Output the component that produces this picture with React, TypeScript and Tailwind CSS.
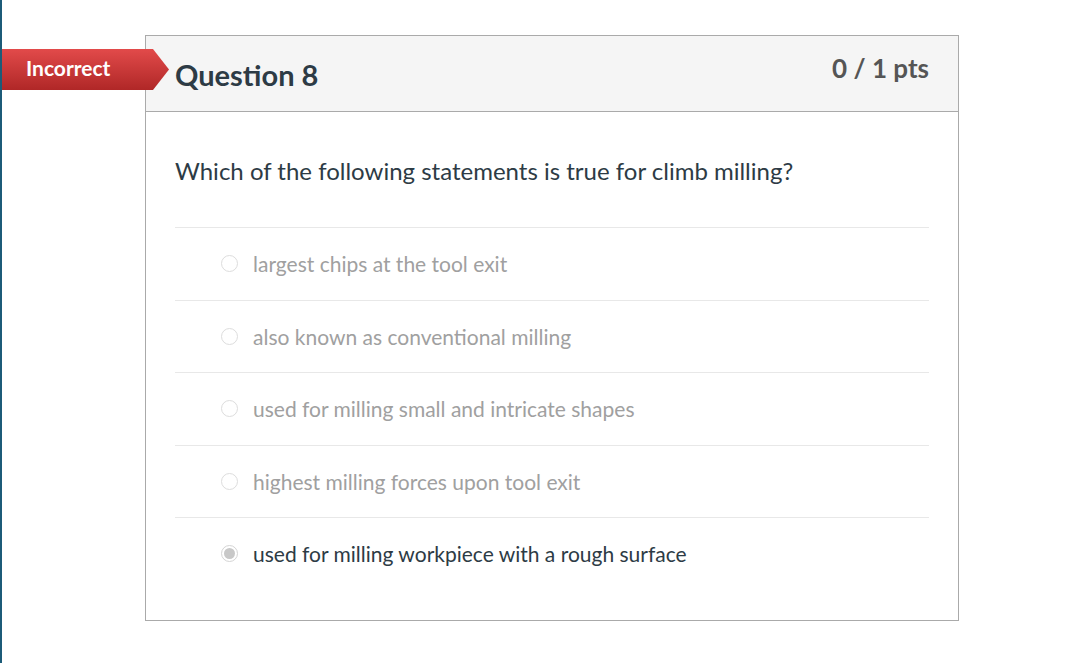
export default function App() {
  const answers = [
    { text: "largest chips at the tool exit", selected: false },
    { text: "also known as conventional milling", selected: false },
    { text: "used for milling small and intricate shapes", selected: false },
    { text: "highest milling forces upon tool exit", selected: false },
    { text: "used for milling workpiece with a rough surface", selected: true },
  ];

  return (
    <div
      className="relative h-[663px] w-full border-l-2 border-[#1c5b78] bg-white"
      style={{ fontFamily: "Lato, 'Open Sans', sans-serif" }}
    >
      <div className="pt-[35px] pl-[143px]">
        <div className="flex h-[586px] w-[814px] flex-col border border-[#aaaaaa]">
          <div className="flex h-[76px] items-start justify-between border-b border-[#aaaaaa] bg-[#f5f5f5] px-[29px]">
            <h2 className="mt-[17px] text-[29px] font-bold text-[#2d3b45]">Question 8</h2>
            <span className="mt-[13px] text-[26px] font-bold text-[#555555]">0 / 1 pts</span>
          </div>
          <div className="px-[29px]">
            <p className="mt-[41px] mb-[38px] text-[24px] text-[#2d3b45]">
              Which of the following statements is true for climb milling?
            </p>
            <div>
              {answers.map((a) => (
                <div
                  key={a.text}
                  className="flex h-[72.5px] items-center border-t border-[#e8e8e8] pl-[46px]"
                >
                  {a.selected ? (
                    <span className="mr-[15px] flex h-[17px] w-[17px] items-center justify-center rounded-full border border-[#d4d4d4] bg-white">
                      <span className="h-[11px] w-[11px] rounded-full bg-[#c8c8c8]" />
                    </span>
                  ) : (
                    <span className="mr-[15px] h-[17px] w-[17px] rounded-full border border-[#dddddd] bg-white" />
                  )}
                  <span
                    className={
                      a.selected
                        ? "text-[21px] text-[#2d3b45]"
                        : "text-[21px] text-[#a0a0a0]"
                    }
                  >
                    {a.text}
                  </span>
                </div>
              ))}
            </div>
          </div>
        </div>
      </div>

      <div className="absolute top-[49px] left-0 flex h-[41px] w-[167px] items-center bg-gradient-to-b from-[#e24a4a] to-[#b02727] pb-[3px] pl-[24px] [clip-path:polygon(0_0,151px_0,167px_50%,151px_100%,0_100%)]">
        <span className="text-[21px] font-bold text-white">Incorrect</span>
      </div>
    </div>
  );
}
